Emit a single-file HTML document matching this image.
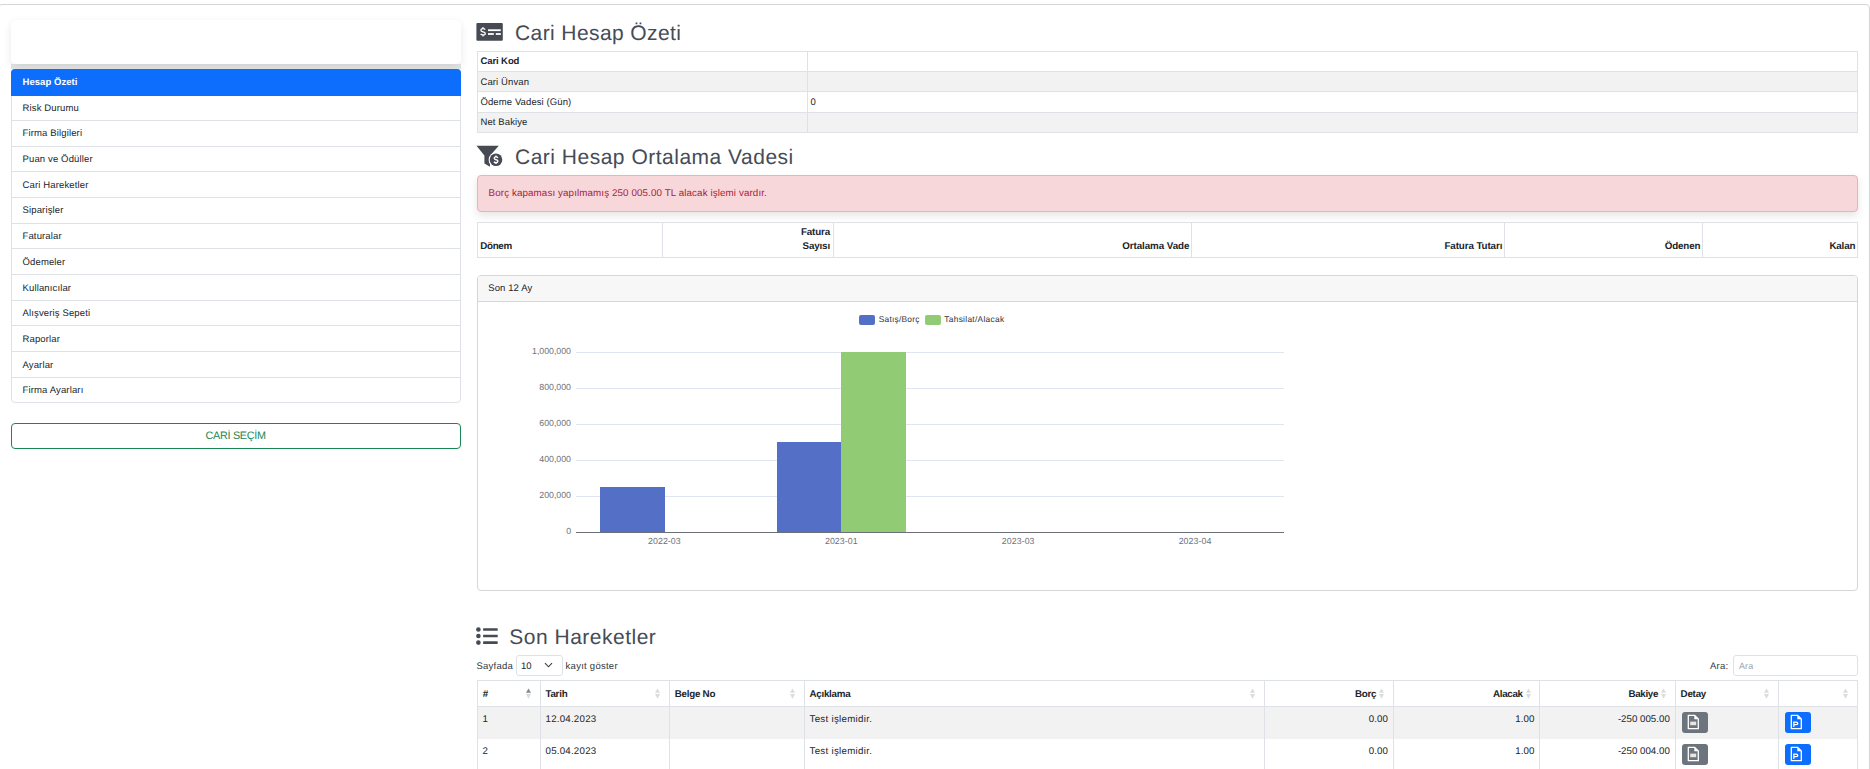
<!DOCTYPE html>
<html><head><meta charset="utf-8"><title>Cari Hesap</title>
<style>
html,body{margin:0;padding:0;background:#fff;}
body{width:1870px;height:769px;overflow:hidden;position:relative;font-family:"Liberation Sans", sans-serif;text-rendering:geometricPrecision;}
</style></head><body>
<div style="position:absolute;left:-2px;top:4px;width:1872px;height:900px;box-sizing:border-box;border:1px solid #d4d4d4;border-radius:4px;background:#fff;"></div><div style="position:absolute;left:11px;top:64px;width:450px;height:5px;box-sizing:border-box;background:#e4e6e6;"></div><div style="position:absolute;left:11px;top:19.5px;width:450px;height:44.5px;box-sizing:border-box;background:#fff;border-radius:5px;box-shadow:0 3px 10px rgba(0,0,0,0.09);"></div><div style="position:absolute;left:11px;top:69px;width:450px;height:334px;box-sizing:border-box;border:1px solid #dee2e6;border-radius:4px;background:#fff;"></div><div style="position:absolute;left:11px;top:69px;width:450px;height:27px;box-sizing:border-box;background:#0d6efd;border-radius:4px 4px 0 0;"></div><div style="position:absolute;left:12px;top:120px;width:448px;height:1px;box-sizing:border-box;background:#dee2e6;"></div><div style="position:absolute;left:12px;top:146px;width:448px;height:1px;box-sizing:border-box;background:#dee2e6;"></div><div style="position:absolute;left:12px;top:171px;width:448px;height:1px;box-sizing:border-box;background:#dee2e6;"></div><div style="position:absolute;left:12px;top:197px;width:448px;height:1px;box-sizing:border-box;background:#dee2e6;"></div><div style="position:absolute;left:12px;top:223px;width:448px;height:1px;box-sizing:border-box;background:#dee2e6;"></div><div style="position:absolute;left:12px;top:248px;width:448px;height:1px;box-sizing:border-box;background:#dee2e6;"></div><div style="position:absolute;left:12px;top:274px;width:448px;height:1px;box-sizing:border-box;background:#dee2e6;"></div><div style="position:absolute;left:12px;top:300px;width:448px;height:1px;box-sizing:border-box;background:#dee2e6;"></div><div style="position:absolute;left:12px;top:325px;width:448px;height:1px;box-sizing:border-box;background:#dee2e6;"></div><div style="position:absolute;left:12px;top:351px;width:448px;height:1px;box-sizing:border-box;background:#dee2e6;"></div><div style="position:absolute;left:12px;top:377px;width:448px;height:1px;box-sizing:border-box;background:#dee2e6;"></div><div style="position:absolute;left:22.5px;top:76.71px;font-size:9.5px;line-height:11.40px;color:#fff;font-weight:700;letter-spacing:0.05px;white-space:nowrap;">Hesap Özeti</div><div style="position:absolute;left:22.5px;top:102.76px;font-size:9.5px;line-height:11.40px;color:#212529;font-weight:400;letter-spacing:0.14px;white-space:nowrap;">Risk Durumu</div><div style="position:absolute;left:22.5px;top:128.44px;font-size:9.5px;line-height:11.40px;color:#212529;font-weight:400;letter-spacing:0.14px;white-space:nowrap;">Firma Bilgileri</div><div style="position:absolute;left:22.5px;top:154.12px;font-size:9.5px;line-height:11.40px;color:#212529;font-weight:400;letter-spacing:0.14px;white-space:nowrap;">Puan ve Ödüller</div><div style="position:absolute;left:22.5px;top:179.80px;font-size:9.5px;line-height:11.40px;color:#212529;font-weight:400;letter-spacing:0.14px;white-space:nowrap;">Cari Hareketler</div><div style="position:absolute;left:22.5px;top:205.48px;font-size:9.5px;line-height:11.40px;color:#212529;font-weight:400;letter-spacing:0.14px;white-space:nowrap;">Siparişler</div><div style="position:absolute;left:22.5px;top:231.16px;font-size:9.5px;line-height:11.40px;color:#212529;font-weight:400;letter-spacing:0.14px;white-space:nowrap;">Faturalar</div><div style="position:absolute;left:22.5px;top:256.84px;font-size:9.5px;line-height:11.40px;color:#212529;font-weight:400;letter-spacing:0.14px;white-space:nowrap;">Ödemeler</div><div style="position:absolute;left:22.5px;top:282.52px;font-size:9.5px;line-height:11.40px;color:#212529;font-weight:400;letter-spacing:0.14px;white-space:nowrap;">Kullanıcılar</div><div style="position:absolute;left:22.5px;top:308.20px;font-size:9.5px;line-height:11.40px;color:#212529;font-weight:400;letter-spacing:0.14px;white-space:nowrap;">Alışveriş Sepeti</div><div style="position:absolute;left:22.5px;top:333.88px;font-size:9.5px;line-height:11.40px;color:#212529;font-weight:400;letter-spacing:0.14px;white-space:nowrap;">Raporlar</div><div style="position:absolute;left:22.5px;top:359.56px;font-size:9.5px;line-height:11.40px;color:#212529;font-weight:400;letter-spacing:0.14px;white-space:nowrap;">Ayarlar</div><div style="position:absolute;left:22.5px;top:385.24px;font-size:9.5px;line-height:11.40px;color:#212529;font-weight:400;letter-spacing:0.14px;white-space:nowrap;">Firma Ayarları</div><div style="position:absolute;left:11px;top:423px;width:450px;height:26px;box-sizing:border-box;border:1px solid #198754;border-radius:4px;"></div><div style="position:absolute;left:35.599999999999994px;width:400px;text-align:center;top:429.78px;font-size:10.8px;line-height:12.96px;color:#198754;font-weight:400;letter-spacing:-0.27px;white-space:nowrap;">CARİ SEÇİM</div><svg style="position:absolute;left:476px;top:23px" width="27" height="18" viewBox="0 0 27 18">
<rect x="0.4" y="0" width="26.4" height="17.8" rx="1" fill="#464b53"/>
<rect x="12" y="6.3" width="12.8" height="1.8" fill="#fff"/>
<rect x="12" y="10.1" width="5.8" height="1.8" fill="#fff"/>
<rect x="19.8" y="10.1" width="5" height="1.8" fill="#fff"/>
<path d="M7 4 V5.6 M7 11.9 V13.5 M9.2 6.6 Q8.5 5.7 7 5.7 Q4.9 5.7 4.9 7.3 Q4.9 8.5 7 8.8 Q9.3 9.2 9.3 10.4 Q9.3 11.9 7 11.9 Q5.4 11.9 4.6 11" fill="none" stroke="#fff" stroke-width="1.25"/>
</svg><div style="position:absolute;left:515px;top:21.12px;font-size:21px;line-height:25.20px;color:#454c56;font-weight:400;letter-spacing:0.4px;white-space:nowrap;">Cari Hesap Özeti</div><div style="position:absolute;left:477px;top:51px;width:1381px;height:82px;box-sizing:border-box;border:1px solid #dee2e6;"></div><div style="position:absolute;left:478px;top:71.5px;width:1379px;height:20px;box-sizing:border-box;background:#f2f2f2;"></div><div style="position:absolute;left:478px;top:112px;width:1379px;height:20px;box-sizing:border-box;background:#f2f2f2;"></div><div style="position:absolute;left:478px;top:71px;width:1379px;height:1px;box-sizing:border-box;background:#dee2e6;"></div><div style="position:absolute;left:478px;top:91px;width:1379px;height:1px;box-sizing:border-box;background:#dee2e6;"></div><div style="position:absolute;left:478px;top:112px;width:1379px;height:1px;box-sizing:border-box;background:#dee2e6;"></div><div style="position:absolute;left:807px;top:52px;width:1px;height:80px;box-sizing:border-box;background:#dee2e6;"></div><div style="position:absolute;left:480.5px;top:56.11px;font-size:9.5px;line-height:11.40px;color:#212529;font-weight:700;letter-spacing:-0.1px;white-space:nowrap;">Cari Kod</div><div style="position:absolute;left:480.5px;top:76.91px;font-size:9.5px;line-height:11.40px;color:#212529;font-weight:400;letter-spacing:0.1px;white-space:nowrap;">Cari Ünvan</div><div style="position:absolute;left:480.5px;top:96.71px;font-size:9.5px;line-height:11.40px;color:#212529;font-weight:400;letter-spacing:0.1px;white-space:nowrap;">Ödeme Vadesi (Gün)</div><div style="position:absolute;left:810.5px;top:96.71px;font-size:9.5px;line-height:11.40px;color:#212529;font-weight:400;letter-spacing:0px;white-space:nowrap;">0</div><div style="position:absolute;left:480.5px;top:117.01px;font-size:9.5px;line-height:11.40px;color:#212529;font-weight:400;letter-spacing:0.1px;white-space:nowrap;">Net Bakiye</div><svg style="position:absolute;left:476px;top:145px" width="28" height="23" viewBox="0 0 28 23">
<path d="M0.5 0.8 H22.8 L15.5 9 Q14 11 14 14 V21.7 L8.4 18.5 V10.5 Z" fill="#464b53"/>
<circle cx="20" cy="14.8" r="7.4" fill="#fff"/>
<circle cx="20" cy="14.8" r="6.3" fill="#464b53"/>
<path d="M20 10.6 V11.8 M20 17.8 V19 M21.9 12.8 Q21.3 11.9 20 11.9 Q18.2 11.9 18.2 13.3 Q18.2 14.4 20 14.7 Q21.9 15 21.9 16.1 Q21.9 17.7 20 17.7 Q18.6 17.7 17.9 16.8" fill="none" stroke="#fff" stroke-width="1.4"/>
</svg><div style="position:absolute;left:515px;top:145.12px;font-size:21px;line-height:25.20px;color:#454c56;font-weight:400;letter-spacing:0.5px;white-space:nowrap;">Cari Hesap Ortalama Vadesi</div><div style="position:absolute;left:477px;top:175px;width:1381px;height:37px;box-sizing:border-box;background:#f8d7da;border:1px solid #f1aeb5;border-radius:4px;box-shadow:0 4px 9px rgba(0,0,0,0.1);"></div><div style="position:absolute;left:488.6px;top:187.72px;font-size:9.8px;line-height:11.76px;color:#a8213a;font-weight:400;letter-spacing:0.1px;white-space:nowrap;">Borç kapaması yapılmamış 250 005.00 TL alacak işlemi vardır.</div><div style="position:absolute;left:477px;top:222px;width:1381px;height:36px;box-sizing:border-box;border:1px solid #dee2e6;"></div><div style="position:absolute;left:662px;top:223px;width:1px;height:34px;box-sizing:border-box;background:#dee2e6;"></div><div style="position:absolute;left:833px;top:223px;width:1px;height:34px;box-sizing:border-box;background:#dee2e6;"></div><div style="position:absolute;left:1191px;top:223px;width:1px;height:34px;box-sizing:border-box;background:#dee2e6;"></div><div style="position:absolute;left:1504px;top:223px;width:1px;height:34px;box-sizing:border-box;background:#dee2e6;"></div><div style="position:absolute;left:1702px;top:223px;width:1px;height:34px;box-sizing:border-box;background:#dee2e6;"></div><div style="position:absolute;left:480.3px;top:241.32px;font-size:9.8px;line-height:11.76px;color:#212529;font-weight:700;letter-spacing:-0.35px;white-space:nowrap;">Dönem</div><div style="position:absolute;right:1040px;top:227.12px;font-size:9.8px;line-height:11.76px;color:#212529;font-weight:700;letter-spacing:-0.15px;white-space:nowrap;">Fatura</div><div style="position:absolute;right:1040px;top:241.32px;font-size:9.8px;line-height:11.76px;color:#212529;font-weight:700;letter-spacing:-0.15px;white-space:nowrap;">Sayısı</div><div style="position:absolute;right:680.7px;top:241.32px;font-size:9.8px;line-height:11.76px;color:#212529;font-weight:700;letter-spacing:-0.08px;white-space:nowrap;">Ortalama Vade</div><div style="position:absolute;right:367.70000000000005px;top:241.32px;font-size:9.8px;line-height:11.76px;color:#212529;font-weight:700;letter-spacing:-0.1px;white-space:nowrap;">Fatura Tutarı</div><div style="position:absolute;right:169.70000000000005px;top:241.32px;font-size:9.8px;line-height:11.76px;color:#212529;font-weight:700;letter-spacing:-0.15px;white-space:nowrap;">Ödenen</div><div style="position:absolute;right:14.700000000000045px;top:241.32px;font-size:9.8px;line-height:11.76px;color:#212529;font-weight:700;letter-spacing:-0.15px;white-space:nowrap;">Kalan</div><div style="position:absolute;left:477px;top:275px;width:1381px;height:316px;box-sizing:border-box;border:1px solid #d6d6d6;border-radius:4px;"></div><div style="position:absolute;left:478px;top:276px;width:1379px;height:25.5px;box-sizing:border-box;background:#f7f7f7;border-bottom:1px solid #d6d6d6;border-radius:3px 3px 0 0;"></div><div style="position:absolute;left:488.3px;top:283.01px;font-size:9.5px;line-height:11.40px;color:#212529;font-weight:400;letter-spacing:0.1px;white-space:nowrap;">Son 12 Ay</div><div style="position:absolute;left:576px;top:352px;width:708px;height:1px;box-sizing:border-box;background:#e0e6f1;"></div><div style="position:absolute;left:576px;top:388px;width:708px;height:1px;box-sizing:border-box;background:#e0e6f1;"></div><div style="position:absolute;left:576px;top:424px;width:708px;height:1px;box-sizing:border-box;background:#e0e6f1;"></div><div style="position:absolute;left:576px;top:460px;width:708px;height:1px;box-sizing:border-box;background:#e0e6f1;"></div><div style="position:absolute;left:576px;top:496px;width:708px;height:1px;box-sizing:border-box;background:#e0e6f1;"></div><div style="position:absolute;left:576px;top:531.5px;width:708px;height:1px;box-sizing:border-box;background:#6e7079;"></div><div style="position:absolute;right:1299px;top:346.07px;font-size:8.8px;line-height:10.56px;color:#6e7079;font-weight:400;letter-spacing:-0.02px;white-space:nowrap;">1,000,000</div><div style="position:absolute;right:1299px;top:382.07px;font-size:8.8px;line-height:10.56px;color:#6e7079;font-weight:400;letter-spacing:-0.02px;white-space:nowrap;">800,000</div><div style="position:absolute;right:1299px;top:418.07px;font-size:8.8px;line-height:10.56px;color:#6e7079;font-weight:400;letter-spacing:-0.02px;white-space:nowrap;">600,000</div><div style="position:absolute;right:1299px;top:454.07px;font-size:8.8px;line-height:10.56px;color:#6e7079;font-weight:400;letter-spacing:-0.02px;white-space:nowrap;">400,000</div><div style="position:absolute;right:1299px;top:490.07px;font-size:8.8px;line-height:10.56px;color:#6e7079;font-weight:400;letter-spacing:-0.02px;white-space:nowrap;">200,000</div><div style="position:absolute;right:1299px;top:526.07px;font-size:8.8px;line-height:10.56px;color:#6e7079;font-weight:400;letter-spacing:-0.02px;white-space:nowrap;">0</div><div style="position:absolute;left:464.4px;width:400px;text-align:center;top:536.27px;font-size:8.8px;line-height:10.56px;color:#6e7079;font-weight:400;letter-spacing:0.06px;white-space:nowrap;">2022-03</div><div style="position:absolute;left:641.3px;width:400px;text-align:center;top:536.27px;font-size:8.8px;line-height:10.56px;color:#6e7079;font-weight:400;letter-spacing:0.06px;white-space:nowrap;">2023-01</div><div style="position:absolute;left:818.2px;width:400px;text-align:center;top:536.27px;font-size:8.8px;line-height:10.56px;color:#6e7079;font-weight:400;letter-spacing:0.06px;white-space:nowrap;">2023-03</div><div style="position:absolute;left:995px;width:400px;text-align:center;top:536.27px;font-size:8.8px;line-height:10.56px;color:#6e7079;font-weight:400;letter-spacing:0.06px;white-space:nowrap;">2023-04</div><div style="position:absolute;left:600.3px;top:487.2px;width:64.5px;height:44.8px;box-sizing:border-box;background:#5470c6;"></div><div style="position:absolute;left:777.2px;top:441.9px;width:64px;height:90.1px;box-sizing:border-box;background:#5470c6;"></div><div style="position:absolute;left:841.2px;top:352px;width:64.5px;height:180px;box-sizing:border-box;background:#91cc75;"></div><div style="position:absolute;left:859px;top:315px;width:16.2px;height:9.7px;box-sizing:border-box;background:#5470c6;border-radius:2px;"></div><div style="position:absolute;left:878.8px;top:314.25px;font-size:8.4px;line-height:10.08px;color:#333;font-weight:400;letter-spacing:0.22px;white-space:nowrap;">Satış/Borç</div><div style="position:absolute;left:924.5px;top:315px;width:16.1px;height:9.7px;box-sizing:border-box;background:#91cc75;border-radius:2px;"></div><div style="position:absolute;left:944.3px;top:314.25px;font-size:8.4px;line-height:10.08px;color:#333;font-weight:400;letter-spacing:0.28px;white-space:nowrap;">Tahsilat/Alacak</div><svg style="position:absolute;left:475px;top:626px" width="24" height="20" viewBox="0 0 24 20">
<circle cx="3.4" cy="3.5" r="2.3" fill="#464b53"/>
<circle cx="3.4" cy="10" r="2.3" fill="#464b53"/>
<circle cx="3.4" cy="16.6" r="2.3" fill="#464b53"/>
<rect x="8.1" y="2.2" width="14.6" height="2.6" rx="0.4" fill="#464b53"/>
<rect x="8.1" y="8.7" width="14.6" height="2.6" rx="0.4" fill="#464b53"/>
<rect x="8.1" y="15.3" width="14.6" height="2.6" rx="0.4" fill="#464b53"/>
</svg><div style="position:absolute;left:509.3px;top:625.12px;font-size:21px;line-height:25.20px;color:#454c56;font-weight:400;letter-spacing:0.5px;white-space:nowrap;">Son Hareketler</div><div style="position:absolute;left:476.4px;top:661.01px;font-size:9.5px;line-height:11.40px;color:#33373b;font-weight:400;letter-spacing:0.26px;white-space:nowrap;">Sayfada</div><div style="position:absolute;left:515.5px;top:655px;width:47px;height:21px;box-sizing:border-box;border:1px solid #dee2e6;border-radius:3px;"></div><div style="position:absolute;left:521px;top:661.41px;font-size:9.5px;line-height:11.40px;color:#212529;font-weight:400;letter-spacing:0px;white-space:nowrap;">10</div><svg style="position:absolute;left:544px;top:662px" width="9" height="6" viewBox="0 0 9 6"><path d="M1 1.2 L4.5 4.8 L8 1.2" stroke="#343a40" stroke-width="1.1" fill="none"/></svg><div style="position:absolute;left:565.6px;top:661.01px;font-size:9.5px;line-height:11.40px;color:#33373b;font-weight:400;letter-spacing:0.26px;white-space:nowrap;">kayıt göster</div><div style="position:absolute;left:1710px;top:661.01px;font-size:9.5px;line-height:11.40px;color:#33373b;font-weight:400;letter-spacing:0.26px;white-space:nowrap;">Ara:</div><div style="position:absolute;left:1733px;top:655px;width:125px;height:21px;box-sizing:border-box;border:1px solid #dee2e6;border-radius:3px;"></div><div style="position:absolute;left:1739px;top:661.08px;font-size:9px;line-height:10.80px;color:#a0a5aa;font-weight:400;letter-spacing:0.1px;white-space:nowrap;">Ara</div><div style="position:absolute;left:477px;top:680px;width:1381px;height:100px;box-sizing:border-box;border:1px solid #dee2e6;"></div><div style="position:absolute;left:478px;top:706px;width:1379px;height:32.7px;box-sizing:border-box;background:#f2f2f2;"></div><div style="position:absolute;left:478px;top:705.5px;width:1379px;height:1px;box-sizing:border-box;background:#dee2e6;"></div><div style="position:absolute;left:540px;top:681px;width:1px;height:100px;box-sizing:border-box;background:#dee2e6;"></div><div style="position:absolute;left:669px;top:681px;width:1px;height:100px;box-sizing:border-box;background:#dee2e6;"></div><div style="position:absolute;left:804px;top:681px;width:1px;height:100px;box-sizing:border-box;background:#dee2e6;"></div><div style="position:absolute;left:1264px;top:681px;width:1px;height:100px;box-sizing:border-box;background:#dee2e6;"></div><div style="position:absolute;left:1393px;top:681px;width:1px;height:100px;box-sizing:border-box;background:#dee2e6;"></div><div style="position:absolute;left:1539px;top:681px;width:1px;height:100px;box-sizing:border-box;background:#dee2e6;"></div><div style="position:absolute;left:1675px;top:681px;width:1px;height:100px;box-sizing:border-box;background:#dee2e6;"></div><div style="position:absolute;left:1778px;top:681px;width:1px;height:100px;box-sizing:border-box;background:#dee2e6;"></div><div style="position:absolute;left:482.8px;top:688.72px;font-size:9.8px;line-height:11.76px;color:#212529;font-weight:700;letter-spacing:-0.25px;white-space:nowrap;">#</div><svg style="position:absolute;left:526.0px;top:688px" width="6" height="12" viewBox="0 0 6 12"><path d="M2.5 0.5 L5 4.8 H0 Z" fill="#85898d"/><path d="M2.5 10.7 L5 5.9 H0 Z" fill="#dcdcdc"/></svg><div style="position:absolute;left:545.4px;top:688.72px;font-size:9.8px;line-height:11.76px;color:#212529;font-weight:700;letter-spacing:-0.25px;white-space:nowrap;">Tarih</div><svg style="position:absolute;left:655.3px;top:688px" width="6" height="12" viewBox="0 0 6 12"><path d="M2.5 0.5 L5 4.8 H0 Z" fill="#dcdcdc"/><path d="M2.5 10.7 L5 5.9 H0 Z" fill="#dcdcdc"/></svg><div style="position:absolute;left:674.6999999999999px;top:688.72px;font-size:9.8px;line-height:11.76px;color:#212529;font-weight:700;letter-spacing:-0.25px;white-space:nowrap;">Belge No</div><svg style="position:absolute;left:790.0px;top:688px" width="6" height="12" viewBox="0 0 6 12"><path d="M2.5 0.5 L5 4.8 H0 Z" fill="#dcdcdc"/><path d="M2.5 10.7 L5 5.9 H0 Z" fill="#dcdcdc"/></svg><div style="position:absolute;left:809.4px;top:688.72px;font-size:9.8px;line-height:11.76px;color:#212529;font-weight:700;letter-spacing:-0.25px;white-space:nowrap;">Açıklama</div><svg style="position:absolute;left:1250.2px;top:688px" width="6" height="12" viewBox="0 0 6 12"><path d="M2.5 0.5 L5 4.8 H0 Z" fill="#dcdcdc"/><path d="M2.5 10.7 L5 5.9 H0 Z" fill="#dcdcdc"/></svg><div style="position:absolute;right:494.0px;top:688.72px;font-size:9.8px;line-height:11.76px;color:#212529;font-weight:700;letter-spacing:-0.35px;white-space:nowrap;">Borç</div><svg style="position:absolute;left:1379.2px;top:688px" width="6" height="12" viewBox="0 0 6 12"><path d="M2.5 0.5 L5 4.8 H0 Z" fill="#dcdcdc"/><path d="M2.5 10.7 L5 5.9 H0 Z" fill="#dcdcdc"/></svg><div style="position:absolute;right:347.39999999999986px;top:688.72px;font-size:9.8px;line-height:11.76px;color:#212529;font-weight:700;letter-spacing:-0.35px;white-space:nowrap;">Alacak</div><svg style="position:absolute;left:1525.8px;top:688px" width="6" height="12" viewBox="0 0 6 12"><path d="M2.5 0.5 L5 4.8 H0 Z" fill="#dcdcdc"/><path d="M2.5 10.7 L5 5.9 H0 Z" fill="#dcdcdc"/></svg><div style="position:absolute;right:212.0px;top:688.72px;font-size:9.8px;line-height:11.76px;color:#212529;font-weight:700;letter-spacing:-0.35px;white-space:nowrap;">Bakiye</div><svg style="position:absolute;left:1661.2px;top:688px" width="6" height="12" viewBox="0 0 6 12"><path d="M2.5 0.5 L5 4.8 H0 Z" fill="#dcdcdc"/><path d="M2.5 10.7 L5 5.9 H0 Z" fill="#dcdcdc"/></svg><div style="position:absolute;left:1680.6px;top:688.72px;font-size:9.8px;line-height:11.76px;color:#212529;font-weight:700;letter-spacing:-0.25px;white-space:nowrap;">Detay</div><svg style="position:absolute;left:1764.3px;top:688px" width="6" height="12" viewBox="0 0 6 12"><path d="M2.5 0.5 L5 4.8 H0 Z" fill="#dcdcdc"/><path d="M2.5 10.7 L5 5.9 H0 Z" fill="#dcdcdc"/></svg><div style="position:absolute;left:1783.7px;top:688.72px;font-size:9.8px;line-height:11.76px;color:#212529;font-weight:700;letter-spacing:-0.25px;white-space:nowrap;"></div><svg style="position:absolute;left:1843.2px;top:688px" width="6" height="12" viewBox="0 0 6 12"><path d="M2.5 0.5 L5 4.8 H0 Z" fill="#dcdcdc"/><path d="M2.5 10.7 L5 5.9 H0 Z" fill="#dcdcdc"/></svg><div style="position:absolute;left:482.5px;top:713.82px;font-size:9.7px;line-height:11.64px;color:#212529;font-weight:400;letter-spacing:0px;white-space:nowrap;">1</div><div style="position:absolute;left:545.5px;top:713.82px;font-size:9.7px;line-height:11.64px;color:#212529;font-weight:400;letter-spacing:0.24px;white-space:nowrap;">12.04.2023</div><div style="position:absolute;left:809.5px;top:713.82px;font-size:9.7px;line-height:11.64px;color:#212529;font-weight:400;letter-spacing:0.3px;white-space:nowrap;">Test işlemidir.</div><div style="position:absolute;right:482px;top:713.82px;font-size:9.7px;line-height:11.64px;color:#212529;font-weight:400;letter-spacing:0.1px;white-space:nowrap;">0.00</div><div style="position:absolute;right:335.5px;top:713.82px;font-size:9.7px;line-height:11.64px;color:#212529;font-weight:400;letter-spacing:0.1px;white-space:nowrap;">1.00</div><div style="position:absolute;right:200.20000000000005px;top:713.82px;font-size:9.7px;line-height:11.64px;color:#212529;font-weight:400;letter-spacing:0.02px;white-space:nowrap;">-250 005.00</div><div style="position:absolute;left:1682px;top:712px;width:26px;height:20.7px;box-sizing:border-box;background:#6c757d;border-radius:3px;"></div><div style="position:absolute;left:1785px;top:712px;width:26px;height:20.7px;box-sizing:border-box;background:#0d6efd;border-radius:3px;"></div><svg style="position:absolute;left:1687px;top:713.5px" width="13" height="16" viewBox="0 0 13 16"><path d="M1.3 1.3 H7.5 L11.3 5 V14.7 H1.3 Z" fill="none" stroke="#fff" stroke-width="1.3" stroke-linejoin="round"/><path d="M7.3 1.3 V5.2 H11.3 Z" fill="#fff"/><rect x="3.2" y="7.6" width="6" height="3.6" fill="#e6e6e6"/></svg><svg style="position:absolute;left:1790.4px;top:713.5px" width="13" height="16" viewBox="0 0 13 16"><path d="M1.3 1.3 H7.5 L11.3 5 V14.7 H1.3 Z" fill="none" stroke="#fff" stroke-width="1.3" stroke-linejoin="round"/><path d="M7.3 1.3 V5.2 H11.3 Z" fill="#fff"/><path d="M3.2 13 V7.6 H6.3 Q8.4 7.6 8.4 9.4 Q8.4 11.2 6.3 11.2 H4.4 V13 Z M4.4 8.7 V10.1 H6.1 Q7 10.1 7 9.4 Q7 8.7 6.1 8.7 Z" fill="#fff" fill-rule="evenodd"/></svg><div style="position:absolute;left:482.5px;top:745.82px;font-size:9.7px;line-height:11.64px;color:#212529;font-weight:400;letter-spacing:0px;white-space:nowrap;">2</div><div style="position:absolute;left:545.5px;top:745.82px;font-size:9.7px;line-height:11.64px;color:#212529;font-weight:400;letter-spacing:0.24px;white-space:nowrap;">05.04.2023</div><div style="position:absolute;left:809.5px;top:745.82px;font-size:9.7px;line-height:11.64px;color:#212529;font-weight:400;letter-spacing:0.3px;white-space:nowrap;">Test işlemidir.</div><div style="position:absolute;right:482px;top:745.82px;font-size:9.7px;line-height:11.64px;color:#212529;font-weight:400;letter-spacing:0.1px;white-space:nowrap;">0.00</div><div style="position:absolute;right:335.5px;top:745.82px;font-size:9.7px;line-height:11.64px;color:#212529;font-weight:400;letter-spacing:0.1px;white-space:nowrap;">1.00</div><div style="position:absolute;right:200.20000000000005px;top:745.82px;font-size:9.7px;line-height:11.64px;color:#212529;font-weight:400;letter-spacing:0.02px;white-space:nowrap;">-250 004.00</div><div style="position:absolute;left:1682px;top:744px;width:26px;height:20.7px;box-sizing:border-box;background:#6c757d;border-radius:3px;"></div><div style="position:absolute;left:1785px;top:744px;width:26px;height:20.7px;box-sizing:border-box;background:#0d6efd;border-radius:3px;"></div><svg style="position:absolute;left:1687px;top:745.5px" width="13" height="16" viewBox="0 0 13 16"><path d="M1.3 1.3 H7.5 L11.3 5 V14.7 H1.3 Z" fill="none" stroke="#fff" stroke-width="1.3" stroke-linejoin="round"/><path d="M7.3 1.3 V5.2 H11.3 Z" fill="#fff"/><rect x="3.2" y="7.6" width="6" height="3.6" fill="#e6e6e6"/></svg><svg style="position:absolute;left:1790.4px;top:745.5px" width="13" height="16" viewBox="0 0 13 16"><path d="M1.3 1.3 H7.5 L11.3 5 V14.7 H1.3 Z" fill="none" stroke="#fff" stroke-width="1.3" stroke-linejoin="round"/><path d="M7.3 1.3 V5.2 H11.3 Z" fill="#fff"/><path d="M3.2 13 V7.6 H6.3 Q8.4 7.6 8.4 9.4 Q8.4 11.2 6.3 11.2 H4.4 V13 Z M4.4 8.7 V10.1 H6.1 Q7 10.1 7 9.4 Q7 8.7 6.1 8.7 Z" fill="#fff" fill-rule="evenodd"/></svg>
</body></html>
